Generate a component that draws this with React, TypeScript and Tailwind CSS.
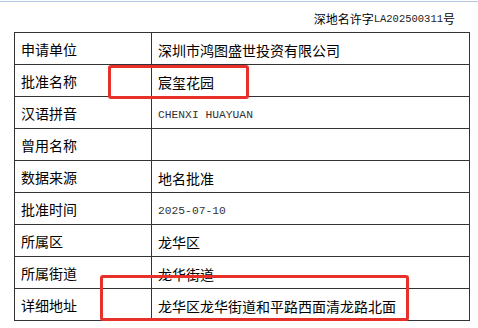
import React from 'react';

const rows: { label: string; value: string; mono?: boolean }[] = [
  { label: '申请单位', value: '深圳市鸿图盛世投资有限公司' },
  { label: '批准名称', value: '宸玺花园' },
  { label: '汉语拼音', value: 'CHENXI HUAYUAN', mono: true },
  { label: '曾用名称', value: '' },
  { label: '数据来源', value: '地名批准' },
  { label: '批准时间', value: '2025-07-10', mono: true },
  { label: '所属区', value: '龙华区' },
  { label: '所属街道', value: '龙华街道' },
  { label: '详细地址', value: '龙华区龙华街道和平路西面清龙路北面' },
];

const cjk = { fontFamily: '"Noto Sans CJK SC", "Noto Sans", sans-serif' };
const mono = { fontFamily: '"Liberation Mono", "Noto Sans CJK SC", monospace' };

export default function App() {
  return (
    <div className="relative w-[478px] h-[328px] bg-white overflow-hidden text-black" style={cjk}>
      {/* top rule */}
      <div className="h-[1px] mt-[1px] bg-[#b3c6e3]" />

      {/* permit number */}
      <div className="h-[30px] flex items-center justify-end pr-[23px] pt-[4px] text-[12px] leading-none">
        <span>深地名许字</span>
        <span className="text-[10.5px] text-[#222]" style={mono}>LA202500311</span>
        <span>号</span>
      </div>

      <table className="ml-[14px] w-[456px] border-collapse table-fixed">
        <colgroup>
          <col className="w-[137px]" />
          <col />
        </colgroup>
        <tbody>
          {rows.map(r => (
            <tr key={r.label} className="h-[32px]">
              <td className="border border-[#333] px-[6px] text-[14px] leading-none align-middle">
                {r.label}
              </td>
              <td className="border border-[#333] px-[6px] leading-none align-middle">
                {r.mono ? (
                  <span className="text-[11.3px] text-[#333]" style={mono}>{r.value}</span>
                ) : (
                  <span className="text-[14px]">{r.value}</span>
                )}
              </td>
            </tr>
          ))}
        </tbody>
      </table>

      {/* red highlight boxes */}
      <div className="absolute left-[108px] top-[65px] w-[141px] h-[34px] border-[3px] border-[#e8302b] rounded-[3px]" />
      <div className="absolute left-[100px] top-[275px] w-[309px] h-[46px] border-[3px] border-[#e8302b] rounded-[3px]" />
    </div>
  );
}
